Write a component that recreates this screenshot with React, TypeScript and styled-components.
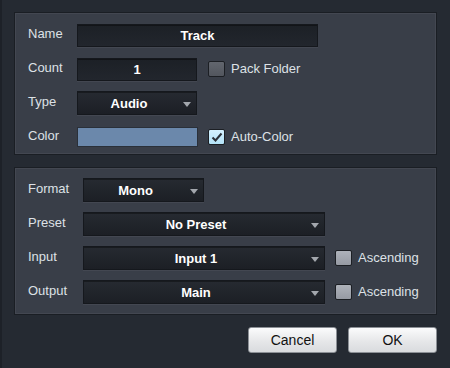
import React, { useState } from "react";
import styled, { createGlobalStyle } from "styled-components";

const GlobalStyle = createGlobalStyle`
  html, body {
    margin: 0;
    padding: 0;
    background: #252a32;
  }
  * {
    box-sizing: border-box;
  }
`;

const Dialog = styled.div`
  width: 450px;
  height: 368px;
  background: #252a32;
  border-left: 2px solid #1d2128;
  padding: 12px 13px 0 12px;
  display: flex;
  flex-direction: column;
  gap: 12px;
  font-family: "Liberation Sans", Arial, Helvetica, sans-serif;
  font-size: 13px;
  color: #dde1e6;
`;

const Panel = styled.section<{ $height: number; $padLeft: number }>`
  height: ${(p) => p.$height}px;
  background: #393e48;
  border: 1px solid #1a1e24;
  box-shadow: inset 0 0 0 1px rgba(255, 255, 255, 0.05);
  padding: 10px 0 0 ${(p) => p.$padLeft}px;
  display: flex;
  flex-direction: column;
  gap: 10px;
`;

const Row = styled.div<{ $labelWidth: number }>`
  display: flex;
  align-items: center;
  height: 24px;

  > label {
    width: ${(p) => p.$labelWidth}px;
    margin-top: -3px;
  }
`;

const Field = styled.div<{ $width: number }>`
  width: ${(p) => p.$width}px;
  height: 23px;
  background: linear-gradient(#1c2026, #22262d);
  border: 1px solid #15181d;
  box-shadow: inset 0 1px 0 rgba(0, 0, 0, 0.35), 0 1px 0 rgba(255, 255, 255, 0.05);
  color: #ffffff;
  font-weight: bold;
  display: flex;
  align-items: center;
  justify-content: center;
`;

const Select = styled(Field)`
  height: 24px;
  position: relative;
  padding-right: 16px;
  background: linear-gradient(#262a31, #1c1f25);

  &::after {
    content: "";
    position: absolute;
    right: 5px;
    top: 10px;
    border-left: 4px solid transparent;
    border-right: 4px solid transparent;
    border-top: 5px solid #a3a7ad;
  }
`;

const Swatch = styled.div<{ $width: number; $color: string }>`
  width: ${(p) => p.$width}px;
  height: 20px;
  background: ${(p) => p.$color};
  border: 1px solid #2a3039;
`;

const Check = styled.span<{ $checked?: boolean; $tone: "dark" | "light" }>`
  width: 17px;
  height: 16px;
  border-radius: 2px;
  border: 1px solid #1c1f24;
  background: ${(p) =>
    p.$checked
      ? "linear-gradient(#d4f1ff, #b3e2f7)"
      : p.$tone === "dark"
      ? "linear-gradient(#62666e, #52565e)"
      : "linear-gradient(#aeb2ba, #969aa3)"};
  display: inline-flex;
  align-items: center;
  justify-content: center;
  flex: none;
`;

const CheckRow = styled.div<{ $gap: number }>`
  display: flex;
  align-items: center;
  margin-left: ${(p) => p.$gap}px;
  gap: 6px;
  cursor: pointer;

  > label {
    margin-top: -1px;
  }
`;

const ButtonBar = styled.div`
  display: flex;
  justify-content: flex-end;
  gap: 11px;
  padding-top: 0;
`;

const Button = styled.button`
  width: 89px;
  height: 26px;
  border: 1px solid #8c9096;
  border-radius: 3px;
  background: linear-gradient(#fbfbfc, #e6e7e9 55%, #d9dbde);
  color: #111;
  font-family: "Liberation Sans", Arial, Helvetica, sans-serif;
  font-size: 14px;
  padding: 0;
`;

function CheckBox({
  label,
  tone,
  gap,
  initial = false,
}: {
  label: string;
  tone: "dark" | "light";
  gap: number;
  initial?: boolean;
}) {
  const [checked, setChecked] = useState(initial);
  return (
    <CheckRow $gap={gap} onClick={() => setChecked(!checked)}>
      <Check $checked={checked} $tone={tone}>
        {checked && (
          <svg width="12" height="10" viewBox="0 0 12 10">
            <path d="M1.5 5.5 L4.5 8.5 L10.5 1.5" fill="none" stroke="#2b3038" strokeWidth="2" />
          </svg>
        )}
      </Check>
      <label>{label}</label>
    </CheckRow>
  );
}

export default function App() {
  return (
    <>
      <GlobalStyle />
      <Dialog>
        <Panel $height={143} $padLeft={13}>
          <Row $labelWidth={49}>
            <label>Name</label>
            <Field $width={241}>Track</Field>
          </Row>
          <Row $labelWidth={49}>
            <label>Count</label>
            <Field $width={120}>1</Field>
            <CheckBox label="Pack Folder" tone="dark" gap={11} />
          </Row>
          <Row $labelWidth={49}>
            <label>Type</label>
            <Select $width={120}>Audio</Select>
          </Row>
          <Row $labelWidth={49}>
            <label>Color</label>
            <Swatch $width={121} $color="#6b88ab" />
            <CheckBox label="Auto-Color" tone="light" gap={10} initial />
          </Row>
        </Panel>
        <Panel $height={148} $padLeft={13}>
          <Row $labelWidth={55}>
            <label>Format</label>
            <Select $width={121}>Mono</Select>
          </Row>
          <Row $labelWidth={55}>
            <label>Preset</label>
            <Select $width={242}>No Preset</Select>
          </Row>
          <Row $labelWidth={55}>
            <label>Input</label>
            <Select $width={242}>Input 1</Select>
            <CheckBox label="Ascending" tone="light" gap={10} />
          </Row>
          <Row $labelWidth={55}>
            <label>Output</label>
            <Select $width={242}>Main</Select>
            <CheckBox label="Ascending" tone="light" gap={10} />
          </Row>
        </Panel>
        <ButtonBar>
          <Button>Cancel</Button>
          <Button>OK</Button>
        </ButtonBar>
      </Dialog>
    </>
  );
}
